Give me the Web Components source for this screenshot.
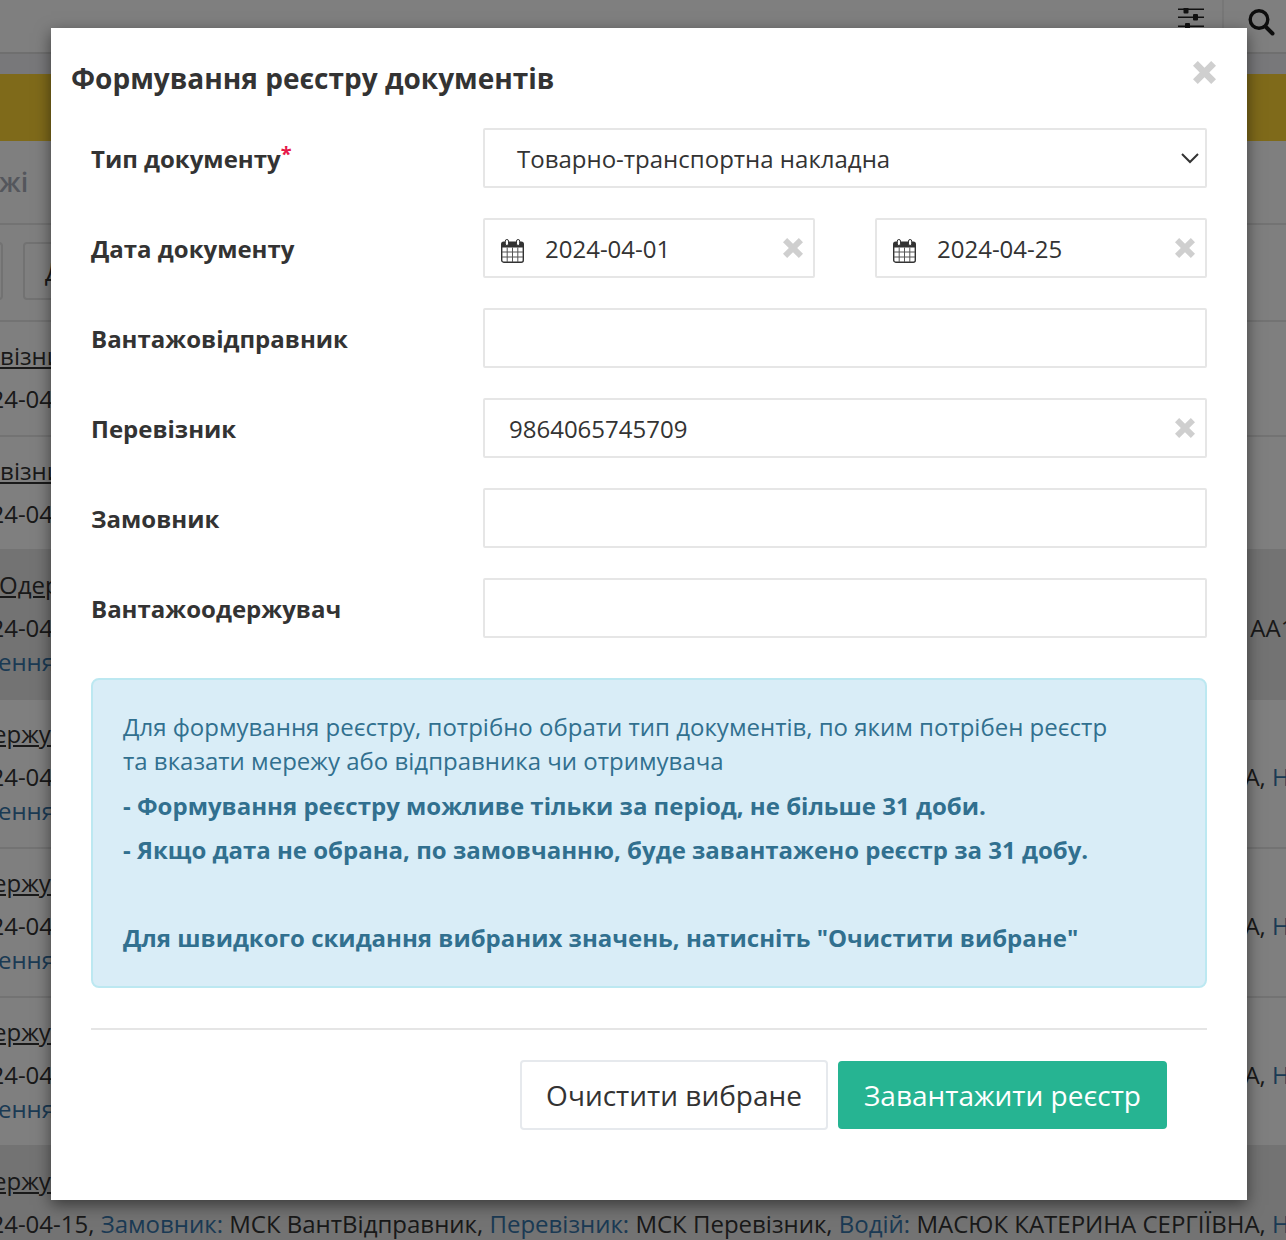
<!DOCTYPE html>
<html lang="uk">
<head>
<meta charset="utf-8">
<title>Реєстр документів</title>
<style>
  html, body { margin: 0; height: 1240px; overflow: hidden; }
  body { font-family: "Open Sans", "Noto Sans", sans-serif; color: #333; background: #fff; }
  b { font-weight: 400; color: #3674a8; }
</style>
</head>
<body>

<template id="row-tpl">
  <style>
    :host { display: block; box-sizing: border-box; border-top: 2px solid #e7e7e7; padding: 19px 0 0 0; overflow: hidden; white-space: nowrap; font-size: 24px; line-height: 34px; color: #333; }
    :host([dark]) { background: #e6e6e6; }
    .title { margin-left: var(--shift, 0); text-decoration: underline; line-height: 30px; height: 30px; }
    .meta { margin: 12px 0 0 -37px; line-height: 32px; }
    .extra { margin-left: -114px; color: #3674a8; line-height: 36px; }
  </style>
  <div class="title"><slot name="title"></slot></div>
  <div class="meta"><slot name="meta"></slot></div>
  <div class="extra"><slot name="extra"></slot></div>
</template>

<script>
  // shared helper: every element stamps its markup into an open shadow root
  class BaseEl extends HTMLElement {
    constructor() {
      super();
      this.attachShadow({ mode: 'open' });
    }
    connectedCallback() {
      if (!this.shadowRoot.hasChildNodes()) this.render();
    }
  }

  const closeIcon = (size, color) => `<svg width="${size}" height="${size}" viewBox="0 0 24 24"><path d="M0 5 5 0l7 7 7-7 5 5-7 7 7 7-5 5-7-7-7 7-5-5 7-7z" fill="${color}"/></svg>`;

  class PageBackdrop extends BaseEl {
    render() {
      this.shadowRoot.innerHTML = `
      <style>
        :host { display: block; height: 1240px; overflow: hidden; position: relative; }
        .top { height: 52px; background: #fff; display: flex; justify-content: flex-end; align-items: stretch; border-bottom: 2px solid #dfdfdf; }
        .tool { width: 62px; display: flex; align-items: flex-start; justify-content: center; padding-top: 8px; box-sizing: border-box; }
        .tool + .tool { width: 64px; border-left: 2px solid #eee; padding-left: 12px; }
        .tool svg { display: block; }
        .strip { height: 20px; background: #f0f1f4; }
        .warn { height: 67px; background: #fed434; }
        .head { height: 82px; display: flex; align-items: center; font-size: 27px; font-weight: 600; color: #a9adb8; padding-bottom: 2px; box-sizing: border-box; }
        .head span { margin-left: -1px; }
        .bar { border-top: 2px solid #e7e7e7; height: 97px; box-sizing: border-box; display: flex; align-items: flex-start; gap: 20px; padding-top: 17px; }
        .chip { height: 58px; border: 2px solid #e4e4e4; border-radius: 4px; box-sizing: border-box; width: 80px; margin-left: -77px; font-size: 25px; line-height: 54px; padding-left: 20px; color: #333; }
        .chip + .chip { margin-left: 0; width: 200px; }
      </style>
      <div class="top">
        <div class="tool"><svg width="26" height="22" viewBox="0 0 26 22" fill="#222"><path d="M0 .4h26V2H0zM0 8.4h26V10H0zM0 17.4h26V19H0z"/><rect x="5.5" y="-1" width="5" height="6.5" rx="1"/><rect x="15" y="6" width="5" height="6.5" rx="1"/><rect x="7" y="15" width="5" height="6.5" rx="1"/></svg></div>
        <div class="tool"><svg width="28" height="28" viewBox="0 0 28 28" fill="none" stroke="#1a1a1a"><circle cx="12" cy="11.5" r="8.8" stroke-width="3.4"/><path d="M18.5 18.5l7 7" stroke-width="4" stroke-linecap="round"/></svg></div>
      </div>
      <div class="strip"></div>
      <div class="warn"></div>
      <div class="head"><span>жі</span></div>
      <div class="bar"><div class="chip"></div><div class="chip">Д</div></div>
      <slot></slot>`;
    }
  }

  class DocRow extends BaseEl {
    render() {
      this.shadowRoot.appendChild(document.getElementById('row-tpl').content.cloneNode(true));
    }
  }

  class DocModal extends BaseEl {
    render() {
      this.shadowRoot.innerHTML = `
      <style>
        :host { display: block; position: absolute; left: 51px; top: 28px; width: 1196px; height: 1172px; box-sizing: border-box; background: #fff; box-shadow: 0 5px 15px rgba(0,0,0,.5); padding: 0 40px; color: #333; }
        .head { height: 100px; position: relative; margin: 0 -20px; }
        h4 { margin: 0; position: absolute; left: 0; top: 29px; font-size: 28px; line-height: 42px; font-weight: 700; }
        .x { position: absolute; right: 11px; top: 33px; line-height: 0; }
        .foot { border-top: 2px solid #e5e5e5; margin-top: 40px; padding: 30px 40px 0 0; display: flex; justify-content: flex-end; align-items: center; gap: 10px; }
      </style>
      <div class="head"><h4><slot name="title"></slot></h4><span class="x">${closeIcon(23, '#cfcfcf')}</span></div>
      <slot></slot>
      <div class="foot"><slot name="foot"></slot></div>`;
    }
  }

  class FormRow extends BaseEl {
    render() {
      this.shadowRoot.innerHTML = `
      <style>
        :host { display: grid; grid-template-columns: 392px 1fr; height: 60px; margin-bottom: 30px; align-items: center; }
        label { font-size: 24px; font-weight: 700; color: #333; line-height: 34px; position: relative; top: 1px; }
        .ctrl { display: flex; gap: 60px; height: 60px; }
        sup { color: #e6194b; font-size: 20px; line-height: 0; position: relative; top: 2px; }
      </style>
      <label><slot name="label"></slot>${this.hasAttribute('required') ? '<sup>*</sup>' : ''}</label>
      <div class="ctrl"><slot></slot></div>`;
    }
  }

  class FormInput extends BaseEl {
    render() {
      this.shadowRoot.innerHTML = `
      <style>
        :host { flex: 1 1 0; display: flex; align-items: center; box-sizing: border-box; height: 60px; border: 2px solid #e6e6e6; border-radius: 2px; background: #fff; position: relative; font-size: 24px; color: #333; padding-left: 24px; }
        :host([date]) { padding-left: 60px; }
        :host([select]) { padding-left: 32px; }
        .cal { position: absolute; left: 16px; top: 19px; line-height: 0; }
        .x { position: absolute; right: 10px; top: 18px; line-height: 0; }
        .chev { position: absolute; right: 4px; top: 21px; line-height: 0; }
      </style>
      ${this.hasAttribute('date') ? `<span class="cal"><svg width="23" height="24" viewBox="0 0 23 24"><rect x=".7" y="3.2" width="21.6" height="20" rx="2" fill="none" stroke="#333" stroke-width="1.4"/><path d="M1 4h21v4.5H1z" fill="#333"/><path d="M1 13h21M1 18h21M6.2 8.5v14.5M11.5 8.5v14.5M16.8 8.5v14.5" stroke="#555" stroke-width="1"/><rect x="4.3" y=".5" width="3.2" height="6" rx="1.6" fill="#fff" stroke="#333" stroke-width="1"/><rect x="15.5" y=".5" width="3.2" height="6" rx="1.6" fill="#fff" stroke="#333" stroke-width="1"/></svg></span>` : ''}
      <slot></slot>
      ${this.hasAttribute('clear') ? `<span class="x">${closeIcon(20, '#cfcfcf')}</span>` : ''}
      ${this.hasAttribute('select') ? `<span class="chev"><svg width="22" height="14" viewBox="0 0 22 14"><path d="M3 3l8 8 8-8" fill="none" stroke="#333" stroke-width="2"/></svg></span>` : ''}`;
    }
  }

  class InfoBox extends BaseEl {
    render() {
      this.shadowRoot.innerHTML = `
      <style>
        :host { display: block; box-sizing: border-box; height: 310px; margin-top: 40px; padding: 30px 30px 0; background: #d9edf7; border: 2px solid #bce8f1; border-radius: 8px; color: #31708f; font-size: 24px; line-height: 34px; }
      </style>
      <slot></slot>`;
    }
  }

  class ActionBtn extends BaseEl {
    render() {
      this.shadowRoot.innerHTML = `
      <style>
        :host { display: inline-flex; align-items: center; justify-content: center; box-sizing: border-box; height: 70px; padding: 0 24px; border: 2px solid #e6e9ed; border-radius: 4px; background: #fff; color: #333; font-size: 28px; }
        :host([primary]) { height: 68px; background: #26b492; border-color: #26b492; color: #fff; }
      </style>
      <slot></slot>`;
    }
  }

  class Dimmer extends BaseEl {
    render() {
      this.shadowRoot.innerHTML = `<style>:host { display: block; position: absolute; inset: 0; background: rgba(0,0,0,.5); }</style>`;
    }
  }

  customElements.define('page-backdrop', PageBackdrop);
  customElements.define('doc-row', DocRow);
  customElements.define('doc-modal', DocModal);
  customElements.define('form-row', FormRow);
  customElements.define('form-input', FormInput);
  customElements.define('info-box', InfoBox);
  customElements.define('action-btn', ActionBtn);
  customElements.define('page-dimmer', Dimmer);
</script>

<page-backdrop>
  <doc-row style="height:115px;--shift:-59px"><span slot="title">Перевізник</span><span slot="meta">2024-04-15</span></doc-row>
  <doc-row style="height:114px;--shift:-59px"><span slot="title">Перевізник</span><span slot="meta">2024-04-15</span></doc-row>
  <doc-row dark style="height:149px;--shift:-1px"><span slot="title">Одержувач</span><span slot="meta">2024-04-15, <b>Замовник:</b> МСК ВантВідправник, <b>Перевізник:</b> МСК Перевізник, <b>Водій:</b> МАСЮК КАТЕРИНА, <b>Номер:</b>&nbsp;&nbsp;<span style="margin-left:5px">АА1234АА</span></span><span slot="extra">Завантаження:</span></doc-row>
  <doc-row style="height:149px;--shift:-136px"><span slot="title">Вантажоодержувач</span><span slot="meta">2024-04-15, <b>Замовник:</b> МСК ВантВідправник, <b>Перевізник:</b> МСК Перевізник, <b>Водій:</b> МАСЮК КАТЕРИНА СЕРГІЇВНА, <b>Номер авто:</b></span><span slot="extra">Завантаження:</span></doc-row>
  <doc-row style="height:149px;--shift:-136px"><span slot="title">Вантажоодержувач</span><span slot="meta">2024-04-15, <b>Замовник:</b> МСК ВантВідправник, <b>Перевізник:</b> МСК Перевізник, <b>Водій:</b> МАСЮК КАТЕРИНА СЕРГІЇВНА, <b>Номер авто:</b></span><span slot="extra">Завантаження:</span></doc-row>
  <doc-row style="height:149px;--shift:-136px"><span slot="title">Вантажоодержувач</span><span slot="meta">2024-04-15, <b>Замовник:</b> МСК ВантВідправник, <b>Перевізник:</b> МСК Перевізник, <b>Водій:</b> МАСЮК КАТЕРИНА СЕРГІЇВНА, <b>Номер авто:</b></span><span slot="extra">Завантаження:</span></doc-row>
  <doc-row dark style="height:95px;--shift:-136px"><span slot="title">Вантажоодержувач</span><span slot="meta">2024-04-15, <b>Замовник:</b> МСК ВантВідправник, <b>Перевізник:</b> МСК Перевізник, <b>Водій:</b> МАСЮК КАТЕРИНА СЕРГІЇВНА, <b>Номер авто:</b></span></doc-row>
</page-backdrop>
<page-dimmer></page-dimmer>

<doc-modal>
  <span slot="title">Формування реєстру документів</span>
  <form-row required><span slot="label">Тип документу</span><form-input select>Товарно-транспортна накладна</form-input></form-row>
  <form-row><span slot="label">Дата документу</span><form-input date clear>2024-04-01</form-input><form-input date clear>2024-04-25</form-input></form-row>
  <form-row><span slot="label">Вантажовідправник</span><form-input></form-input></form-row>
  <form-row><span slot="label">Перевізник</span><form-input clear>9864065745709</form-input></form-row>
  <form-row><span slot="label">Замовник</span><form-input></form-input></form-row>
  <form-row><span slot="label">Вантажоодержувач</span><form-input></form-input></form-row>
  <info-box>
    Для формування реєстру, потрібно обрати тип документів, по яким потрібен реєстр<br>
    та вказати мережу або відправника чи отримувача
    <div style="font-weight:700;margin-top:11px">- Формування реєстру можливе тільки за період, не більше 31 доби.</div>
    <div style="font-weight:700;margin-top:10px">- Якщо дата не обрана, по замовчанню, буде завантажено реєстр за 31 добу.</div>
    <div style="font-weight:700;margin-top:54px">Для швидкого скидання вибраних значень, натисніть "Очистити вибране"</div>
  </info-box>
  <action-btn slot="foot">Очистити вибране</action-btn>
  <action-btn slot="foot" primary>Завантажити реєстр</action-btn>
</doc-modal>

</body>
</html>
